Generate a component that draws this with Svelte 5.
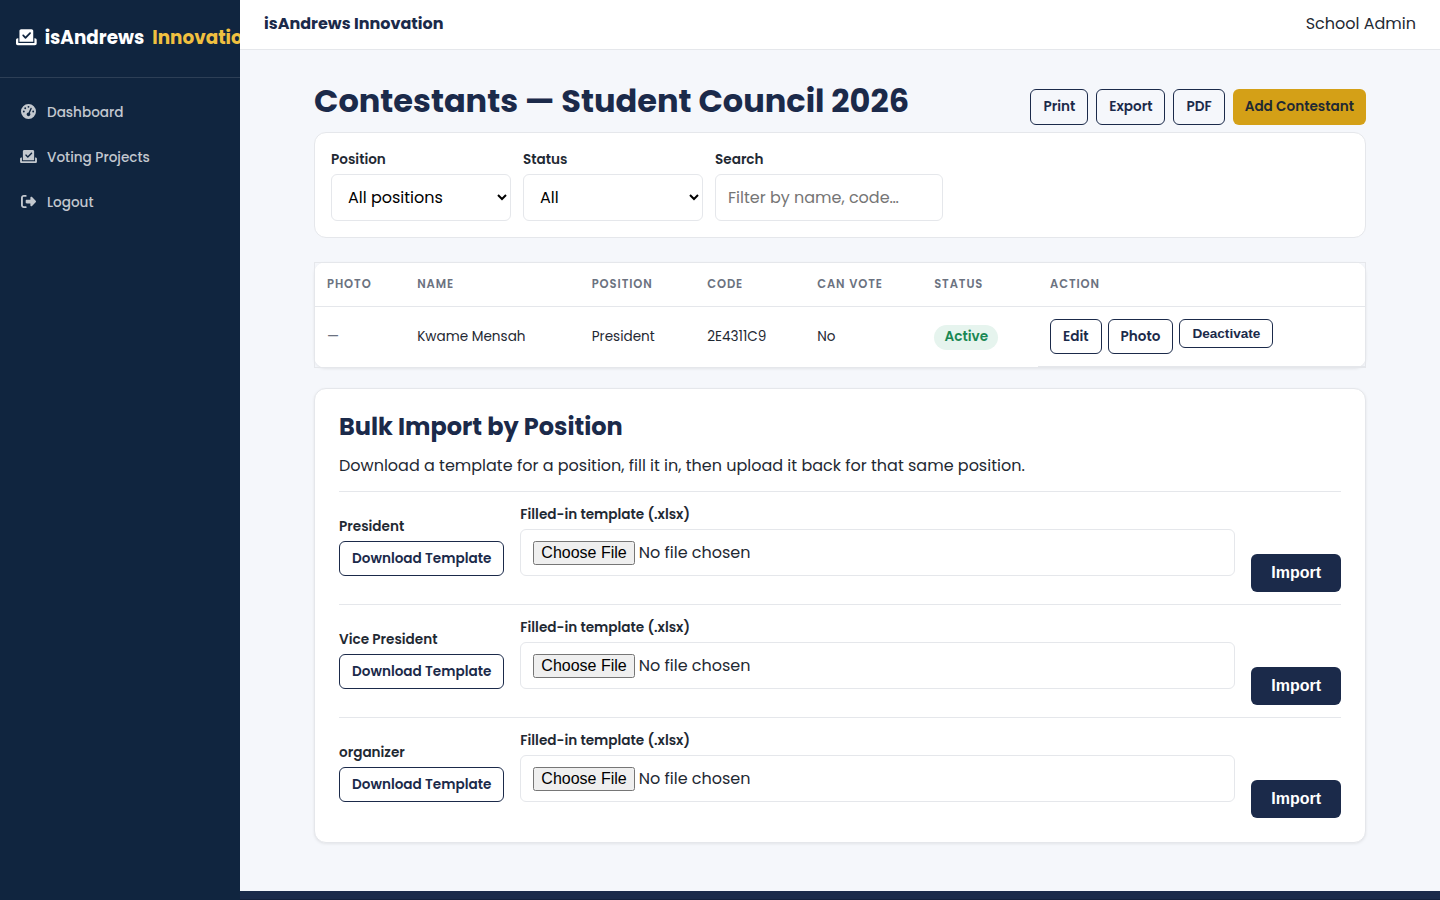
<script>
	let position = "all";
	let status = "all";
	let search = "";

	// Font Awesome style glyphs used in the sidebar
	const icons = {
		vote: {
			box: "0 0 576 512",
			path: "M96 80c0-26.5 21.5-48 48-48l288 0c26.5 0 48 21.5 48 48l0 304L96 384 96 80zm313 47c-9.4-9.4-24.6-9.4-33.9 0l-111 111-47-47c-9.4-9.4-24.6-9.4-33.9 0s-9.4 24.6 0 33.9l64 64c9.4 9.4 24.6 9.4 33.9 0L409 161c9.4-9.4 9.4-24.6 0-33.9zM0 336c0-26.5 21.5-48 48-48l16 0 0 128 448 0 0-128 16 0c26.5 0 48 21.5 48 48l0 96c0 26.5-21.5 48-48 48L48 480c-26.5 0-48-21.5-48-48l0-96z"
		},
		gauge: {
			box: "0 0 512 512",
			path: "M0 256a256 256 0 1 1 512 0A256 256 0 1 1 0 256zM288 96a32 32 0 1 0 -64 0 32 32 0 1 0 64 0zM256 416c35.3 0 64-28.7 64-64c0-17.4-6.9-33.1-18.1-44.6L366 161.7c5.3-12.1-.2-26.3-12.3-31.6s-26.3 .2-31.6 12.3L257.9 288c-.6 0-1.3 0-1.9 0c-35.3 0-64 28.7-64 64s28.7 64 64 64zM176 144a32 32 0 1 0 -64 0 32 32 0 1 0 64 0zM96 288a32 32 0 1 0 0-64 32 32 0 1 0 0 64zm352-32a32 32 0 1 0 -64 0 32 32 0 1 0 64 0z"
		},
		logout: {
			box: "0 0 512 512",
			path: "M377.9 105.9L500.7 228.7c7.2 7.2 11.3 17.1 11.3 27.3s-4.1 20.1-11.3 27.3L377.9 406.1c-6.4 6.4-15 9.9-24 9.9c-18.7 0-33.9-15.2-33.9-33.9l0-62.1-128 0c-17.7 0-32-14.3-32-32l0-64c0-17.7 14.3-32 32-32l128 0 0-62.1c0-18.7 15.2-33.9 33.9-33.9c9 0 17.6 3.6 24 9.9zM160 96L96 96c-17.7 0-32 14.3-32 32l0 256c0 17.7 14.3 32 32 32l64 0c17.7 0 32 14.3 32 32s-14.3 32-32 32l-64 0c-53 0-96-43-96-96L0 128C0 75 43 32 96 32l64 0c17.7 0 32 14.3 32 32s-14.3 32-32 32z"
		}
	};

	const links = [
		{ icon: "gauge", label: "Dashboard" },
		{ icon: "vote", label: "Voting Projects" },
		{ icon: "logout", label: "Logout" }
	];

	const positions = ["President", "Vice President", "organizer"];

	const contestants = [
		{ name: "Kwame Mensah", position: "President", code: "2E4311C9", canVote: "No", active: true }
	];

	// Apply the three filters to the list
	$: visible = contestants.filter(
		(c) =>
			(position === "all" || c.position === position) &&
			(status === "all" || c.active === (status === "active")) &&
			`${c.name} ${c.code}`.toLowerCase().includes(search.toLowerCase())
	);
</script>

<div class="layout">
	<aside class="sidebar">
		<div class="brand">
			<svg viewBox={icons.vote.box}><path d={icons.vote.path} /></svg>
			<span>isAndrews</span>
			<span class="accent">Innovation</span>
		</div>
		<nav>
			{#each links as link}
				<a href="#top">
					<svg viewBox={icons[link.icon].box}><path d={icons[link.icon].path} /></svg>
					<span>{link.label}</span>
				</a>
			{/each}
		</nav>
	</aside>

	<div class="content">
		<header class="topbar">
			<strong>isAndrews Innovation</strong>
			<span>School Admin</span>
		</header>

		<main>
			<div class="page-head">
				<h1>Contestants — Student Council 2026</h1>
				<div class="page-actions">
					<a class="btn-sm" href="#top">Print</a>
					<a class="btn-sm" href="#top">Export</a>
					<a class="btn-sm" href="#top">PDF</a>
					<a class="btn-sm gold" href="#top">Add Contestant</a>
				</div>
			</div>

			<div class="filters">
				<div class="field">
					<label for="position">Position</label>
					<select id="position" bind:value={position}>
						<option value="all">All positions</option>
						{#each positions as name}
							<option value={name}>{name}</option>
						{/each}
					</select>
				</div>
				<div class="field">
					<label for="status">Status</label>
					<select id="status" bind:value={status}>
						<option value="all">All</option>
						<option value="active">Active</option>
						<option value="inactive">Inactive</option>
					</select>
				</div>
				<div class="field search">
					<label for="search">Search</label>
					<input id="search" type="text" placeholder="Filter by name, code…" bind:value={search} />
				</div>
			</div>

			<table>
				<colgroup>
					<col class="col-photo" />
					<col class="col-name" />
					<col class="col-position" />
					<col class="col-code" />
					<col class="col-vote" />
					<col class="col-status" />
					<col />
				</colgroup>
				<thead>
					<tr>
						<th>Photo</th>
						<th>Name</th>
						<th>Position</th>
						<th>Code</th>
						<th>Can Vote</th>
						<th>Status</th>
						<th>Action</th>
					</tr>
				</thead>
				<tbody>
					{#each visible as c}
						<tr>
							<td><span class="muted">—</span></td>
							<td>{c.name}</td>
							<td>{c.position}</td>
							<td>{c.code}</td>
							<td>{c.canVote}</td>
							<td><span class="badge">{c.active ? "Active" : "Inactive"}</span></td>
							<td class="actions">
								<a class="btn-sm" href="#top">Edit</a>
								<a class="btn-sm" href="#top">Photo</a>
								<button class="btn-sm" type="button">Deactivate</button>
							</td>
						</tr>
					{/each}
				</tbody>
			</table>

			<section class="import-card">
				<h2>Bulk Import by Position</h2>
				<p>Download a template for a position, fill it in, then upload it back for that same position.</p>

				{#each positions as name, i}
					<div class="import-row">
						<div class="template">
							<strong>{name}</strong>
							<a class="btn-sm" href="#top">Download Template</a>
						</div>
						<div class="upload">
							<label for="file-{i}">Filled-in template (.xlsx)</label>
							<input id="file-{i}" type="file" accept=".xlsx" />
						</div>
						<button class="import" type="button">Import</button>
					</div>
				{/each}
			</section>
		</main>

		<footer></footer>
	</div>
</div>

<style>
	:global(body) {
		margin: 0;
		background: #f5f7fb;
	}
	.layout {
		display: flex;
		height: 900px;
		overflow: hidden;
		font-family: Poppins, Inter, sans-serif;
		font-size: 16px;
		line-height: 1.6;
		color: #1f2933;
	}
	.layout * {
		box-sizing: border-box;
	}
	a {
		text-decoration: none;
	}

	/* Sidebar */
	.sidebar {
		flex: 0 0 240px;
		background: #10253f;
		overflow: hidden;
	}
	.brand {
		display: flex;
		align-items: center;
		gap: 8px;
		height: 78px;
		padding: 0 16px 2px;
		border-bottom: 1px solid rgba(255, 255, 255, 0.12);
		color: #fff;
		font-size: 18.4px;
		font-weight: 700;
		white-space: nowrap;
	}
	.brand svg {
		flex: none;
		width: 20.7px;
		height: 18.4px;
		fill: currentColor;
	}
	.accent {
		color: #f0c040;
	}
	nav {
		display: flex;
		flex-direction: column;
		gap: 1px;
		padding-top: 11.6px;
	}
	nav a {
		display: flex;
		align-items: center;
		gap: 9px;
		height: 44px;
		padding-left: 19px;
		color: rgba(255, 255, 255, 0.75);
		font-size: 13.6px;
		font-weight: 500;
	}
	nav span {
		padding-top: 3px;
	}
	nav svg {
		width: 19px;
		height: 15px;
		fill: currentColor;
	}

	/* Page */
	.content {
		flex: 1;
		min-width: 0;
	}
	.topbar {
		display: flex;
		align-items: center;
		justify-content: space-between;
		height: 50px;
		padding: 0 24px 2px;
		background: #fff;
		border-bottom: 1px solid #e5e7eb;
	}
	.topbar strong {
		font-weight: 700;
		color: #1b2a4a;
	}
	main {
		max-width: 1100px;
		margin: 0 auto;
		padding: 27px 24px 48px;
	}
	.page-head {
		display: flex;
		align-items: flex-end;
		justify-content: space-between;
		margin-bottom: 7px;
	}
	h1 {
		margin: 0;
		color: #1b2a4a;
		font-size: 32px;
		font-weight: 700;
		line-height: 48px;
	}
	.page-actions {
		display: flex;
		gap: 8px;
	}
	.btn-sm {
		display: inline-block;
		padding: 5.6px 12px;
		border: 1px solid #1b2a4a;
		border-radius: 6px;
		background: transparent;
		color: #1b2a4a;
		font-size: 13.6px;
		font-weight: 600;
	}
	button.btn-sm {
		font-family: "Liberation Sans", Arial, sans-serif;
		line-height: 16px;
	}
	.page-actions .btn-sm {
		padding: 6px 12px;
		line-height: 22px;
	}
	.page-actions .gold {
		padding: 7px 12px;
		border: 0;
		background: #d4a017;
		color: #1f2933;
	}

	/* Filters */
	.filters {
		display: flex;
		gap: 12px;
		margin-bottom: 24px;
		padding: 16px;
		border: 1px solid #e5e7eb;
		border-radius: 12px;
		background: #fff;
	}
	.field {
		width: 180px;
	}
	.field.search {
		width: 228px;
	}
	label {
		display: block;
		margin-bottom: 3px;
		font-size: 13.6px;
		font-weight: 600;
		line-height: 22px;
	}
	input,
	select {
		display: block;
		width: 100%;
		height: 47px;
		padding: 10.4px 12px;
		border: 1px solid #e5e7eb;
		border-radius: 6px;
		background: #fff;
		font-family: inherit;
		font-size: 16px;
	}

	/* Contestant list */
	table {
		width: 100%;
		margin-bottom: 20px;
		table-layout: fixed;
		border-collapse: collapse;
		border: 1px solid #e5e7eb;
		border-radius: 12px;
		background: #fff;
		box-shadow: 0 1px 3px rgba(0, 0, 0, 0.08);
		font-size: 13.6px;
	}
	.col-photo {
		width: 90.7px;
	}
	.col-name {
		width: 174.5px;
	}
	.col-position {
		width: 115.5px;
	}
	.col-code {
		width: 110px;
	}
	.col-vote {
		width: 117px;
	}
	.col-status {
		width: 115.8px;
	}
	th,
	td {
		padding: 12px;
		border-bottom: 1px solid #e5e7eb;
		text-align: left;
		vertical-align: middle;
	}
	th {
		padding-bottom: 12.8px;
		color: #6b7280;
		font-size: 11.52px;
		font-weight: 600;
		letter-spacing: 0.08em;
		text-transform: uppercase;
	}
	.actions {
		display: flex;
		align-items: flex-start;
		gap: 6px;
	}
	.muted {
		color: #6b7280;
	}
	.badge {
		display: inline-block;
		padding: 1.6px 10.4px;
		border-radius: 999px;
		background: #e6f4ee;
		color: #198754;
		font-weight: 600;
		vertical-align: 1px;
	}

	/* Bulk import */
	.import-card {
		padding: 24px;
		border: 1px solid #e5e7eb;
		border-radius: 12px;
		background: #fff;
		box-shadow: 0 1px 3px rgba(0, 0, 0, 0.08);
	}
	h2 {
		margin: 0 0 12px;
		color: #1b2a4a;
		font-size: 24px;
		font-weight: 700;
		line-height: 28px;
	}
	p {
		margin: 0 0 12px;
		line-height: 26px;
	}
	.import-row {
		display: flex;
		align-items: flex-end;
		gap: 16px;
		padding: 12px 0;
		border-top: 1px solid #e5e7eb;
	}
	.import-row:last-child {
		padding-bottom: 0;
	}
	.template {
		display: flex;
		flex-direction: column;
		margin-bottom: 16px;
	}
	.template strong {
		margin-bottom: 3.4px;
		font-size: 13.6px;
		font-weight: 600;
	}
	.upload {
		flex: 1;
		margin-bottom: 16px;
	}
	input[type="file"] {
		padding: 9.4px 12px;
		color: #1f2933;
	}
	input::file-selector-button {
		font-family: "Liberation Sans", Arial, sans-serif;
		font-size: 16px;
	}
	.import {
		padding: 10px 20px;
		border: 0;
		border-radius: 6px;
		background: #1b2a4a;
		color: #fff;
		font-family: "Liberation Sans", Arial, sans-serif;
		font-size: 16px;
		font-weight: 600;
	}

	footer {
		height: 60px;
		border-top: 8px solid #1b2a4a;
		background: #14213d;
	}
</style>
